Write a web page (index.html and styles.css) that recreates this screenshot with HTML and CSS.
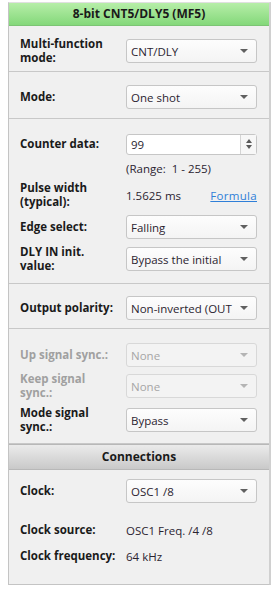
FILE: index.html
```html
<!DOCTYPE html>
<html>
<head>
<meta charset="utf-8">
<link rel="stylesheet" href="styles.css">
</head>
<body>
<div class="panel">
  <div class="head head-green">8-bit CNT5/DLY5 (MF5)</div>

  <div class="section s1">
    <div class="row h26">
      <div class="label">Multi-function<br>mode:</div>
      <div class="select"><span>CNT/DLY</span><i class="arrow"></i></div>
    </div>
  </div>

  <div class="section s2">
    <div class="row h26">
      <div class="label">Mode:</div>
      <div class="select"><span>One shot</span><i class="arrow"></i></div>
    </div>
  </div>

  <div class="section s3">
    <div class="row h26">
      <div class="label">Counter data:</div>
      <div class="spin"><span>99</span><div class="spin-btn"><i class="up"></i><i class="down"></i></div></div>
    </div>
    <div class="row h22">
      <div></div>
      <div class="value">(Range:&nbsp; 1 - 255)</div>
    </div>
    <div class="row h32">
      <div class="label">Pulse width<br>(typical):</div>
      <div class="value split"><span>1.5625 ms</span><a class="link">Formula</a></div>
    </div>
    <div class="row h32">
      <div class="label">Edge select:</div>
      <div class="select"><span>Falling</span><i class="arrow"></i></div>
    </div>
    <div class="row h32">
      <div class="label">DLY IN init.<br>value:</div>
      <div class="select"><span>Bypass the initial</span><i class="arrow"></i></div>
    </div>
  </div>

  <div class="section s4">
    <div class="row h32">
      <div class="label">Output polarity:</div>
      <div class="select"><span>Non-inverted (OUT</span><i class="arrow"></i></div>
    </div>
  </div>

  <div class="section s5">
    <div class="row h32">
      <div class="label dis">Up signal sync.:</div>
      <div class="select disabled"><span>None</span><i class="arrow"></i></div>
    </div>
    <div class="row h30">
      <div class="label dis">Keep signal<br>sync.:</div>
      <div class="select disabled"><span>None</span><i class="arrow"></i></div>
    </div>
    <div class="row h32 gap-3">
      <div class="label">Mode signal<br>sync.:</div>
      <div class="select"><span>Bypass</span><i class="arrow"></i></div>
    </div>
  </div>

  <div class="head head-gray">Connections</div>

  <div class="section s6">
    <div class="row h32">
      <div class="label">Clock:</div>
      <div class="select"><span>OSC1 /8</span><i class="arrow"></i></div>
    </div>
    <div class="row h26 gap-10">
      <div class="label">Clock source:</div>
      <div class="value">OSC1 Freq. /4 /8</div>
    </div>
    <div class="row h26">
      <div class="label">Clock frequency:</div>
      <div class="value">64 kHz</div>
    </div>
  </div>
</div>
</body>
</html>
```

FILE: styles.css
```css
html, body {
  margin: 0;
  padding: 0;
  background: #ffffff;
}

body {
  font-family: "Open Sans", "Noto Sans", sans-serif;
  font-size: 11.5px;
  color: #1a1a1a;
}

.panel {
  margin: 2px 0 0 8px;
  width: 260px;
  background: #f0f0f0;
  border-left: 1px solid #c4c4c4;
  border-right: 2px solid #d0d0d0;
  border-top: 1px solid #e0e0e0;
  border-bottom: 1px solid #c4c4c4;
}

.head {
  text-align: center;
  font-weight: 700;
  font-size: 12px;
  line-height: 22px;
  height: 22px;
  color: #1a1a1a;
}

.head-green {
  background: linear-gradient(#b6eea8, #84d87a);
  border-bottom: 1px solid #7cc474;
}

.head-gray {
  background: linear-gradient(#ebebeb, #c9c9c9);
  border-top: 1px solid #b8b8b8;
  border-bottom: 1px solid #b8b8b8;
  height: 24px;
  line-height: 24px;
}

.section {
  padding: 0 10px 0 11px;
  border-bottom: 1px solid #c8c8c8;
  display: flex;
  flex-direction: column;
}

.s1 { padding-top: 11px; padding-bottom: 8px; }
.s2 { padding-top: 12px; padding-bottom: 8px; }
.s3 { padding-top: 12px; padding-bottom: 8px; }
.s4 { padding-top: 8px; padding-bottom: 4px; }
.s5 { padding-top: 10px; padding-bottom: 7px; }
.s6 { padding-top: 5px; padding-bottom: 15px; border-bottom: none; }

.row {
  display: grid;
  grid-template-columns: 106px 131px;
  align-items: center;
}

.h22 { height: 22px; }
.h26 { height: 26px; }
.h30 { height: 30px; }
.h32 { height: 32px; }
.gap-3 { margin-top: 3px; }
.gap-10 { margin-top: 10px; }

.label {
  font-weight: 700;
  line-height: 14px;
  color: #1a1a1a;
}

.label.dis { color: #a0a0a0; }

.value {
  color: #2b2430;
}

.split {
  display: flex;
  justify-content: space-between;
  align-items: center;
}

.link {
  color: #2f7fd8;
  text-decoration: underline;
  letter-spacing: 0.3px;
}

.select {
  height: 24px;
  box-sizing: border-box;
  border: 1px solid #c6c6c6;
  border-radius: 3px;
  background: linear-gradient(#fdfdfd, #f4f4f4);
  display: flex;
  align-items: center;
  padding: 0 8px 0 4px;
  color: #2b2430;
  white-space: nowrap;
}

.select span {
  flex: 1 1 auto;
  min-width: 0;
  overflow: hidden;
}

.select.disabled {
  background: #f3f3f3;
  border-color: #d8d8d8;
  color: #a6a6a6;
}

.arrow {
  flex: none;
  width: 0;
  height: 0;
  border-left: 4px solid transparent;
  border-right: 4px solid transparent;
  border-top: 4px solid #606060;
  margin-left: 6px;
}

.select.disabled .arrow { border-top-color: #b4b4b4; }

.spin {
  height: 21px;
  box-sizing: border-box;
  border: 1px solid #c6c6c6;
  border-radius: 3px;
  background: #ffffff;
  display: flex;
  align-items: center;
  justify-content: space-between;
  padding-left: 4px;
  color: #2b2430;
}

.spin-btn {
  width: 15px;
  height: 100%;
  border-left: 1px solid #d4d4d4;
  display: flex;
  flex-direction: column;
  align-items: center;
  justify-content: center;
  gap: 2px;
  background: #f7f7f7;
}

.up, .down {
  width: 0;
  height: 0;
  border-left: 3.5px solid transparent;
  border-right: 3.5px solid transparent;
}

.up { border-bottom: 4px solid #5a5a5a; }
.down { border-top: 4px solid #5a5a5a; }
```
